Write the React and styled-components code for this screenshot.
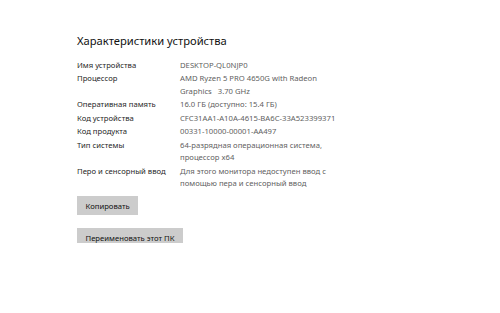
import React from "react";
import styled, { createGlobalStyle } from "styled-components";

const GlobalStyle = createGlobalStyle`
  html, body {
    margin: 0;
    padding: 0;
    background: #ffffff;
  }
  body {
    font-family: "Noto Sans", "Open Sans", sans-serif;
  }
`;

const specs = [
  { label: "Имя устройства", value: ["DESKTOP-QL0NJP0"] },
  {
    label: "Процессор",
    value: ["AMD Ryzen 5 PRO 4650G with Radeon", "Graphics\u00a0\u00a0\u00a03.70 GHz"],
  },
  { label: "Оперативная память", value: ["16.0 ГБ (доступно: 15.4 ГБ)"] },
  { label: "Код устройства", value: ["CFC31AA1-A10A-4615-BA6C-33A523399371"] },
  { label: "Код продукта", value: ["00331-10000-00001-AA497"] },
  {
    label: "Тип системы",
    value: ["64-разрядная операционная система,", "процессор x64"],
  },
  {
    label: "Перо и сенсорный ввод",
    value: ["Для этого монитора недоступен ввод с", "помощью пера и сенсорный ввод"],
  },
];

const Page = () => {
  return (
    <Wrapper>
      <GlobalStyle />
      <Title>Характеристики устройства</Title>

      <SpecList>
        {specs.map((s) => (
          <React.Fragment key={s.label}>
            <Label>{s.label}</Label>
            <Value>
              {s.value.map((line) => (
                <div key={line}>{line}</div>
              ))}
            </Value>
          </React.Fragment>
        ))}
      </SpecList>

      <Actions>
        <Button>Копировать</Button>
        <Button>Переименовать этот ПК</Button>
      </Actions>
    </Wrapper>
  );
};

const Wrapper = styled.section`
  height: 243px;
  overflow: hidden;
  padding: 31px 0 0 77px;
  box-sizing: border-box;
`;

const Title = styled.h2`
  margin: 0;
  font-size: 11.2px;
  font-weight: 400;
  line-height: 20px;
  color: #111;
`;

const SpecList = styled.div`
  display: grid;
  grid-template-columns: 103px auto;
  row-gap: 1px;
  margin-top: 7.5px;
  font-size: 7.7px;
  line-height: 12.5px;
`;

const Label = styled.div`
  color: #1f1f1f;
`;

const Value = styled.div`
  color: #5f5f5f;
`;

const Actions = styled.div`
  display: flex;
  flex-direction: column;
  align-items: flex-start;
  gap: 13px;
  margin-top: 6.5px;
`;

const Button = styled.button`
  border: none;
  background: #cccccc;
  color: #111;
  font-family: "Noto Sans", "Open Sans", sans-serif;
  font-size: 7.7px;
  height: 19px;
  padding: 0 8.5px;
  cursor: pointer;
`;

export default Page;
